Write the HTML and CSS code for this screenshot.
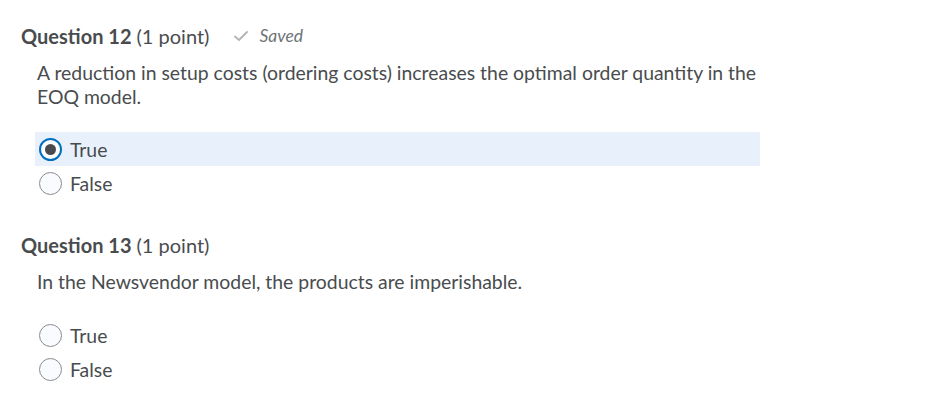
FILE: index.html
```html
<!DOCTYPE html>
<html>
<head>
<meta charset="utf-8">
<link rel="stylesheet" href="styles.css">
</head>
<body>
<div class="page">
  <section class="question">
    <h2 class="q-head"><span class="q-title">Question 12</span> <span class="q-points">(1 point)</span>
      <span class="saved"><svg class="check" width="16" height="14" viewBox="0 0 16 14"><path d="M2 7.5 L6 11 L14 3" fill="none" stroke="#b1b4b7" stroke-width="1.8" stroke-linecap="round" stroke-linejoin="round"/></svg><span class="saved-text">Saved</span></span>
    </h2>
    <p class="q-body">A reduction in setup costs (ordering costs) increases the optimal order quantity in the EOQ model.</p>
    <div class="options">
      <label class="option selected"><span class="radio checked"><span class="dot"></span></span><span class="opt-text">True</span></label>
      <label class="option"><span class="radio"></span><span class="opt-text">False</span></label>
    </div>
  </section>
  <section class="question q2">
    <h2 class="q-head"><span class="q-title">Question 13</span> <span class="q-points">(1 point)</span></h2>
    <p class="q-body">In the Newsvendor model, the products are imperishable.</p>
    <div class="options">
      <label class="option"><span class="radio"></span><span class="opt-text">True</span></label>
      <label class="option"><span class="radio"></span><span class="opt-text">False</span></label>
    </div>
  </section>
</div>
</body>
</html>
```
FILE: styles.css
```css
html, body {
  margin: 0;
  padding: 0;
  background: #ffffff;
}
body {
  font-family: Lato, "Open Sans", "Liberation Sans", sans-serif;
  color: #494c4e;
}
.page {
  padding: 23px 0 0 21px;
}
.question {
  display: flex;
  flex-direction: column;
}
.q2 {
  margin-top: 32px;
}
.q-head {
  margin: 0;
  font-size: 20px;
  line-height: 26px;
  font-weight: 400;
  display: flex;
  align-items: center;
  gap: 5px;
}
.q-title {
  font-weight: 700;
}
.saved {
  display: inline-flex;
  align-items: center;
  margin-left: 19px;
  gap: 10px;
}
.saved-text {
  font-style: italic;
  font-size: 17.5px;
  color: #6e7376;
}
.q-body {
  margin: 12px 0 0 16px;
  font-size: 19.4px;
  line-height: 24px;
  width: 740px;
}
.options {
  margin-top: 23px;
  margin-left: 14px;
  display: flex;
  flex-direction: column;
  width: 725px;
}
.q2 .options {
  margin-top: 24px;
}
.option {
  display: flex;
  align-items: center;
  height: 34px;
  gap: 8px;
  padding-left: 4px;
  font-size: 19.4px;
}
.option.selected {
  background: #e8f1fb;
}
.radio {
  width: 23px;
  height: 23px;
  box-sizing: border-box;
  border: 1px solid #868c8f;
  border-radius: 50%;
  background: #f9fbff;
  display: flex;
  align-items: center;
  justify-content: center;
}
.radio.checked {
  border: 2px solid #006fbf;
  background: #ffffff;
}
.dot {
  width: 11px;
  height: 11px;
  border-radius: 50%;
  background: #494c4e;
}
```
